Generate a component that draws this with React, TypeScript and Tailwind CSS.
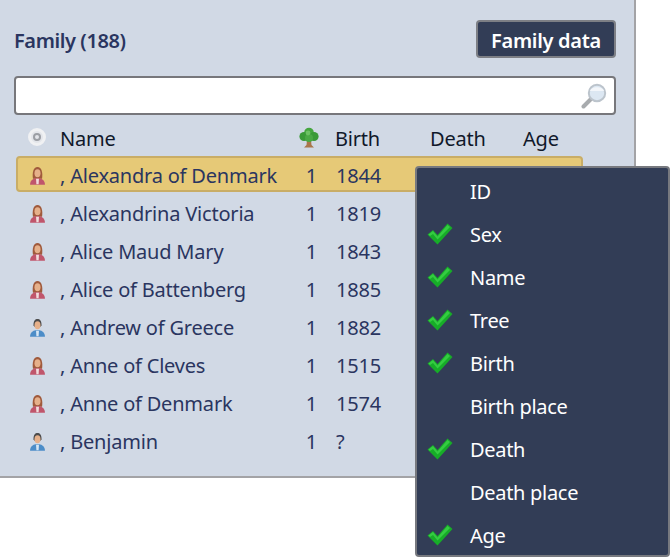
const PEOPLE = [
  { name: ", Alexandra of Denmark", birth: "1844", sex: "f" },
  { name: ", Alexandrina Victoria", birth: "1819", sex: "f" },
  { name: ", Alice Maud Mary", birth: "1843", sex: "f" },
  { name: ", Alice of Battenberg", birth: "1885", sex: "f" },
  { name: ", Andrew of Greece", birth: "1882", sex: "m" },
  { name: ", Anne of Cleves", birth: "1515", sex: "f" },
  { name: ", Anne of Denmark", birth: "1574", sex: "f" },
  { name: ", Benjamin", birth: "?", sex: "m" },
];

const COLUMNS = [
  { label: "ID", on: false },
  { label: "Sex", on: true },
  { label: "Name", on: true },
  { label: "Tree", on: true },
  { label: "Birth", on: true },
  { label: "Birth place", on: false },
  { label: "Death", on: true },
  { label: "Death place", on: false },
  { label: "Age", on: true },
];

function PersonIcon({ sex }: { sex: string }) {
  const female = sex === "f";
  return (
    <svg width="17" height="20" viewBox="0 0 18 22">
      <path
        d={female ? "M4 14 C3 7 4.5 1 9 1 C13.5 1 15 7 14 14 Z" : "M4.6 8 C4.4 3 6.5 1 9 1 C11.5 1 13.6 3 13.4 8 L12 10 H6 Z"}
        fill={female ? "#a05a3c" : "#4d4c4c"}
      />
      <ellipse cx="9" cy="8" rx="3.3" ry="4.4" fill="#e6b08a" />
      <path
        d="M0.8 20.5 C0.8 16 4 14 7 13.5 H11 C14 14 17.2 16 17.2 20.5 Z"
        fill={female ? "#c0566c" : "#4c8dc8"}
      />
      <path d="M7.4 14 H10.6 L10.2 20 H7.8 Z" fill={female ? "#f1dcdc" : "#d6e6f4"} />
    </svg>
  );
}

function TreeIcon() {
  return (
    <svg width="20" height="22" viewBox="0 0 20 22">
      <path d="M8 13 H12 L12.5 18 L15 20.5 H5 L7.5 18 Z" fill="#a9764a" />
      <circle cx="10" cy="5.5" r="4.8" fill="#45a63f" />
      <circle cx="5" cy="9.5" r="4.6" fill="#3a9a38" />
      <circle cx="15" cy="9.5" r="4.6" fill="#3a9a38" />
      <circle cx="10" cy="11" r="4" fill="#4aa945" />
      <circle cx="9" cy="6" r="2.4" fill="#6cc163" />
    </svg>
  );
}

function CheckIcon() {
  return (
    <svg width="26" height="22" viewBox="0 0 26 22">
      <path d="M0.5 11.5 L6 7 L10.5 12 L20.5 0.5 L25.5 5 L10.5 21.5 Z" fill="#17ad28" />
      <path d="M1.5 11.5 L6 8 L10.5 13.5 L20.5 2 L23 4 L10.5 16.5 L6 11 L3 13 Z" fill="#35cc42" />
    </svg>
  );
}

function LensIcon() {
  return (
    <svg width="26" height="26" viewBox="0 0 26 26">
      <path d="M10 16 L2.5 23.5" stroke="#a8abae" strokeWidth="4" strokeLinecap="round" />
      <circle cx="16" cy="10" r="8.2" fill="#dce7f2" stroke="#bcc4cc" strokeWidth="2" />
      <path d="M9 8 C10 3 22 3 23 8 Z" fill="#f3f6fa" />
    </svg>
  );
}

export default function App() {
  return (
    <div className="relative h-[558px] w-[670px] overflow-hidden bg-white font-['Noto_Sans',sans-serif] text-[#2a3560]">
      <div className="h-[478px] w-[636px] border-r-[2px] border-b-[2px] border-[#a3a3a6] bg-[#d1d9e5] px-[14px] pt-[20px]">
        <div className="flex h-[38px] items-center justify-between pr-[4px]">
          <h2 className="pt-[3px] text-[20px] font-semibold tracking-[-0.4px]">Family (188)</h2>
          <button className="flex h-[38px] w-[140px] items-center justify-center rounded-[4px] border-2 border-[#7d7f85] bg-[#323d56] pt-[3px] text-[20px] font-semibold tracking-[-0.3px] text-white">
            Family data
          </button>
        </div>

        <div className="mt-[18px] mr-[4px] flex h-[39px] items-center justify-end rounded-[4px] border-2 border-[#77777b] bg-white pr-[7px]">
          <LensIcon />
        </div>

        <div className="mt-[5px] grid h-[35px] grid-cols-[46px_239px_36px_95px_93px_1fr] items-center pt-[3px] text-[20px] tracking-[-0.2px] text-[#10182a]">
          <span className="flex justify-center pr-[1px] pb-[4px]">
            <span className="flex h-[18px] w-[18px] items-center justify-center rounded-full border-[3px] border-[#f0f1f3] bg-[#e3e5ea]">
              <span className="h-[8px] w-[8px] rounded-full border-2 border-[#9b9ea4]" />
            </span>
          </span>
          <span>Name</span>
          <span className="flex justify-start pb-[3px]">
            <TreeIcon />
          </span>
          <span>Birth</span>
          <span>Death</span>
          <span>Age</span>
        </div>

        {PEOPLE.map((p, i) => (
          <div key={p.name} className="h-[38px] pt-[1px]">
            <div
              className={`ml-[2px] grid h-[36px] w-[567px] grid-cols-[42px_232px_44px_1fr] items-center rounded-[4px] border-2 pt-[3px] text-[20px] tracking-[-0.2px] ${
                i === 0 ? "border-[#c9ad66] bg-[#e6c977]" : "border-transparent"
              }`}
            >
              <span className="flex justify-center pr-[4px]">
                <PersonIcon sex={p.sex} />
              </span>
              <span className="whitespace-nowrap">{p.name}</span>
              <span className="pr-[19px] text-right">1</span>
              <span>{p.birth}</span>
            </div>
          </div>
        ))}
      </div>

      <div className="absolute top-[166px] left-[415px] h-[391px] w-[255px] rounded-[4px] border-2 border-[#77797f] bg-[#323d56] py-[2px] text-[20px] tracking-[-0.3px] text-white">
        {COLUMNS.map((c) => (
          <div key={c.label} className="flex h-[43px] items-center">
            <span className="flex w-[53px] pb-[2px] pl-[10px]">{c.on && <CheckIcon />}</span>
            <span>{c.label}</span>
          </div>
        ))}
      </div>
    </div>
  );
}
